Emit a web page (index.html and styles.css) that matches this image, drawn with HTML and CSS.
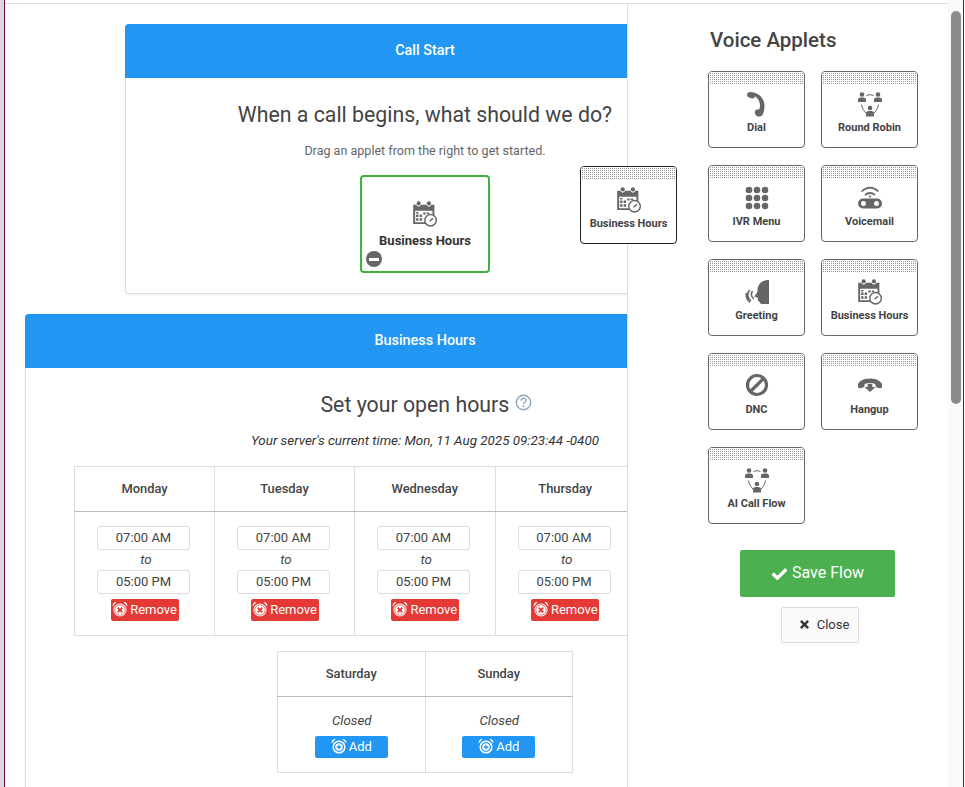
FILE: index.html
```html
<!DOCTYPE html>
<html>
<head>
    <title>Call Flow</title>
    <link rel="stylesheet" href="styles.css">
</head>
<body>
    <svg class="icon-defs" width="0" height="0">
        <symbol id="i-calendar" viewBox="2.500 1 25.500 27">
            <path fill="currentColor" d="M3 5h3.200a2.600 2.600 0 0 0 5 0h5.600a2.600 2.600 0 0 0 5 0H25v13h-2a7 7 0 0 0-7 7H3zM5 11v12h10.400a8 8 0 0 1 7.600-7V11z" fill-rule="evenodd"/>
            <circle cx="8.700" cy="3.500" r="2.200" fill="currentColor"/>
            <circle cx="19.300" cy="3.500" r="2.200" fill="currentColor"/>
            <path fill="currentColor" d="M6 15h2.500v2.500H6zM9.700 15h2.500v2.500H9.700zM6 19h2.500v2.500H6zM9.700 19h2.500v2.500H9.700zM13.400 13h2.500v2H13.400zM17 13h2.500v1.500H17zM6 12.500h2.500v1.500H6z"/>
            <circle cx="21" cy="21" r="6" fill="#fff" stroke="currentColor" stroke-width="1.500"/>
            <path d="M20 22l3.500-3" stroke="currentColor" stroke-width="1.500" fill="none"/>
        </symbol>
        <symbol id="i-people" viewBox="-1 -1 26 26">
            <circle cx="4" cy="2.500" r="2.300" fill="currentColor"/>
            <circle cx="20" cy="2.500" r="2.300" fill="currentColor"/>
            <circle cx="12" cy="16" r="2.300" fill="currentColor"/>
            <path fill="currentColor" d="M0 10V7.500C0 6 1.500 5.400 4 5.400s4 .6 4 2.100V10zM16 10V7.500C16 6 17.500 5.400 20 5.400s4 .6 4 2.100V10zM8 24.500V21c0-1.500 1.500-2 4-2s4 .5 4 2v3.500z"/>
            <path fill="none" stroke="currentColor" stroke-width="1" d="M8.500 3.500Q12 1.700 15.500 3.500M3.500 12.500C4 16 6 19 8 21M20.500 12.500C20 16 18 19 16 21"/>
        </symbol>
        <symbol id="i-dial" viewBox="0 0 26 26">
            <path fill="currentColor" d="M6 1C4.300 1 3 2.200 3 3.800c0 1.300 1 2.600 2.500 3l3 .7c1.200 0 2.200-1 2.500-2.300 3 2 5 5.500 5 9.500 0 1.500-.3 2.600-.8 3.500-2-.3-3.700.6-4.200 2-.6 2.300.5 4.500 2.800 5.200 2 .6 4-.3 5.200-2.500 1-2.400 1.500-5.400 1.500-8.400C20.500 7 14 1 6 1z"/>
        </symbol>
        <symbol id="i-keypad" viewBox="-1 -1 26 26">
            <circle cx="4" cy="4" r="3.300" fill="currentColor"/><circle cx="12" cy="4" r="3.300" fill="currentColor"/><circle cx="20" cy="4" r="3.300" fill="currentColor"/>
            <circle cx="4" cy="12" r="3.300" fill="currentColor"/><circle cx="12" cy="12" r="3.300" fill="currentColor"/><circle cx="20" cy="12" r="3.300" fill="currentColor"/>
            <circle cx="4" cy="20" r="3.300" fill="currentColor"/><circle cx="12" cy="20" r="3.300" fill="currentColor"/><circle cx="20" cy="20" r="3.300" fill="currentColor"/>
        </symbol>
        <symbol id="i-voicemail" viewBox="-1 -1 26 26">
            <path fill="none" stroke="currentColor" stroke-width="1.700" d="M3.500 5.500Q12-2.400 20.500 5.500M7 9Q12 5 17 9"/>
            <path fill="currentColor" d="M10.200 9.800h3.600L12 11.800z"/>
            <path fill="currentColor" fill-rule="evenodd" d="M5 12.500h14a5 5 0 0 1 0 10H5a5 5 0 0 1 0-10zM5.500 15a2.500 2.500 0 1 0 0 5 2.500 2.500 0 0 0 0-5zM18.500 15a2.500 2.500 0 1 0 0 5 2.500 2.500 0 0 0 0-5z"/>
        </symbol>
        <symbol id="i-greeting" viewBox="-1 -1 26 26">
            <path fill="currentColor" d="M24 0v24h-7c-1.500 0-2.500-1-2.500-2.500-1 0-1.700-.5-1.700-1.200 0-.4.200-.7.400-.9-.5-.2-.7-.6-.6-1 0-.3.200-.5.400-.7-1.300-.2-3.500-.5-3.500-1.400 0-1 2.800-3 3-4.800C12.300 5 16 0 24 0z"/>
            <path fill="none" stroke="currentColor" stroke-width="1.600" d="M7.500 11c-2 3-1 6 1.500 8M4.500 10c-2.700 4-2 8 1.500 11M1.500 13c-1 3 0 6 3.500 9.500"/>
        </symbol>
        <symbol id="i-ban" viewBox="0 0 26 26">
            <circle cx="13" cy="12" r="9.500" fill="none" stroke="currentColor" stroke-width="3.200"/>
            <path d="M6.500 18.500l13-13" stroke="currentColor" stroke-width="3.200"/>
        </symbol>
        <symbol id="i-hangup" viewBox="0 0 28 28">
            <path fill="currentColor" d="M1 13c0-3 5-7 13-7s13 4 13 7c0 2-.5 3.500-1.500 3.500-1.500 0-4-1-5-1.500-.7-.4-.6-2-.7-2.800-1.500-1-3.500-1.300-5.800-1.300s-4.300.3-5.800 1.300c-.1.800 0 2.400-.7 2.800-1 .5-3.500 1.500-5 1.500C1.500 16.500 1 15 1 13z"/>
            <path fill="currentColor" d="M11.500 11.500h5V15H20l-6 5.500L8 15h3.500z"/>
        </symbol>
        <symbol id="i-alarm-x" viewBox="0 0 16 16">
            <circle cx="8" cy="9" r="6.500" fill="#fff"/>
            <path fill="#fff" d="M.8 5.500C.2 3 1.800 1 4.500 1zM15.200 5.500C15.800 3 14.200 1 11.500 1z"/>
            <path fill="none" stroke="currentColor" stroke-width="1.800" d="M5.700 6.700l4.600 4.600M10.300 6.700l-4.600 4.600"/>
            <circle cx="8" cy="9" r="5.200" fill="none" stroke="currentColor" stroke-width=".7"/>
        </symbol>
        <symbol id="i-alarm-plus" viewBox="0 0 16 16">
            <circle cx="8" cy="9" r="5.800" fill="none" stroke="#fff" stroke-width="1.500"/>
            <circle cx="8" cy="9" r="3.800" fill="#fff"/>
            <path fill="#fff" d="M.8 5.500C.2 3 1.800 1 4.500 1zM15.200 5.500C15.800 3 14.200 1 11.500 1z"/>
            <path fill="none" stroke="currentColor" stroke-width="1.300" d="M8 6.800v4.400M5.800 9h4.400"/>
        </symbol>
    </svg>

    <div class="edge"></div>
    <div class="frame">
        <div class="top-rule"></div>
        <div class="workspace">
            <div class="canvas">
                <section class="flow-card flow-card-small">
                    <div class="flow-card-head">Call Start</div>
                    <div class="flow-card-body start-body">
                        <h2>When a call begins, what should we do?</h2>
                        <p class="hint">Drag an applet from the right to get started.</p>
                        <div class="drop-box">
                            <svg class="drop-icon"><use href="#i-calendar"/></svg>
                            <span>Business Hours</span>
                            <span class="minus-badge"></span>
                        </div>
                    </div>
                </section>

                <section class="flow-card flow-card-wide">
                    <div class="flow-card-head">Business Hours</div>
                    <div class="flow-card-body hours-body">
                        <h2 class="hours-title">Set your open hours
                            <svg class="help-icon" viewBox="0 0 16 16"><circle cx="8" cy="8" r="6.800" fill="none" stroke="currentColor" stroke-width="1.300"/><path d="M5.800 6.300c0-3 4.500-3 4.500-.2 0 1.700-2.300 1.700-2.300 3.500" fill="none" stroke="currentColor" stroke-width="1.300"/><circle cx="8" cy="11.500" r=".9" fill="currentColor"/></svg>
                        </h2>
                        <p class="server-time">Your server's current time: Mon, 11 Aug 2025 09:23:44 -0400</p>

                        <table class="hours-table week">
                            <tr>
                                <th>Monday</th><th>Tuesday</th><th>Wednesday</th><th>Thursday</th>
                            </tr>
                            <tr>
                                <td><div class="time-box">07:00 AM</div><div class="to">to</div><div class="time-box">05:00 PM</div><button class="btn-remove"><svg><use href="#i-alarm-x"/></svg>Remove</button></td>
                                <td><div class="time-box">07:00 AM</div><div class="to">to</div><div class="time-box">05:00 PM</div><button class="btn-remove"><svg><use href="#i-alarm-x"/></svg>Remove</button></td>
                                <td><div class="time-box">07:00 AM</div><div class="to">to</div><div class="time-box">05:00 PM</div><button class="btn-remove"><svg><use href="#i-alarm-x"/></svg>Remove</button></td>
                                <td><div class="time-box">07:00 AM</div><div class="to">to</div><div class="time-box">05:00 PM</div><button class="btn-remove"><svg><use href="#i-alarm-x"/></svg>Remove</button></td>
                            </tr>
                        </table>

                        <table class="hours-table weekend">
                            <tr>
                                <th>Saturday</th><th>Sunday</th>
                            </tr>
                            <tr>
                                <td><div class="closed">Closed</div><button class="btn-add"><svg><use href="#i-alarm-plus"/></svg>Add</button></td>
                                <td><div class="closed">Closed</div><button class="btn-add"><svg><use href="#i-alarm-plus"/></svg>Add</button></td>
                            </tr>
                        </table>
                    </div>
                </section>
            </div>

            <aside class="sidebar">
                <h3>Voice Applets</h3>
                <div class="applet-grid">
                    <div class="applet"><div class="grip"></div><svg><use href="#i-dial"/></svg><span>Dial</span></div>
                    <div class="applet"><div class="grip"></div><svg><use href="#i-people"/></svg><span>Round Robin</span></div>
                    <div class="applet"><div class="grip"></div><svg><use href="#i-keypad"/></svg><span>IVR Menu</span></div>
                    <div class="applet"><div class="grip"></div><svg><use href="#i-voicemail"/></svg><span>Voicemail</span></div>
                    <div class="applet"><div class="grip"></div><svg><use href="#i-greeting"/></svg><span>Greeting</span></div>
                    <div class="applet"><div class="grip"></div><svg><use href="#i-calendar"/></svg><span>Business Hours</span></div>
                    <div class="applet"><div class="grip"></div><svg><use href="#i-ban"/></svg><span>DNC</span></div>
                    <div class="applet"><div class="grip"></div><svg><use href="#i-hangup"/></svg><span>Hangup</span></div>
                    <div class="applet"><div class="grip"></div><svg><use href="#i-people"/></svg><span>AI Call Flow</span></div>
                </div>
                <div class="sidebar-actions">
                    <button class="btn-save">
                        <svg viewBox="0 0 20 16"><path d="M2 8.500l5.500 5.500L18 3.500" fill="none" stroke="currentColor" stroke-width="4"/></svg>Save Flow
                    </button>
                    <button class="btn-close">
                        <svg viewBox="0 0 12 12"><path d="M2 2l8 8M10 2l-8 8" fill="none" stroke="currentColor" stroke-width="2.600"/></svg>Close
                    </button>
                </div>
            </aside>

            <div class="applet dragging"><div class="grip"></div><svg><use href="#i-calendar"/></svg><span>Business Hours</span></div>
        </div>
    </div>
    <div class="scroll-track"><div class="scroll-thumb"></div></div>
    <div class="edge-right"></div>
</body>
</html>
```

FILE: styles.css
```css
* {
    box-sizing: border-box;
}

html, body {
    height: 100%;
}

body {
    font-family: 'Roboto', sans-serif;
    margin: 0;
    background-color: #fff;
    color: #333;
    display: flex;
    overflow: hidden;
}

.icon-defs {
    position: absolute;
}

.edge {
    width: 5px;
    flex: none;
    background-color: #dbd8dc;
    border-right: 1px solid #7b0a45;
}

.edge-right {
    width: 2px;
    flex: none;
    border-left: 1px solid #7b0a45;
}

.frame {
    flex: 1;
    min-width: 0;
    display: flex;
    flex-direction: column;
}

.top-rule {
    height: 4px;
    flex: none;
    border-bottom: 1px solid #ddd;
}

.workspace {
    flex: 1;
    min-height: 0;
    display: flex;
    position: relative;
}

.scroll-track {
    width: 15px;
    flex: none;
    background-color: #fafafa;
    padding: 11px 2px 0 3px;
}

.scroll-thumb {
    height: 393px;
    background-color: #8c8c8c;
    border-radius: 5px;
}

/* left side, cut off by the sidebar */
.canvas {
    width: 622px;
    flex: none;
    overflow: hidden;
    padding-top: 20px;
}

.flow-card {
    background-color: #fff;
    border: 1px solid #ddd;
    border-radius: 4px;
    box-shadow: 0 1px 2px rgba(0, 0, 0, 0.08);
}

.flow-card-small {
    width: 600px;
    margin-left: 120px;
    height: 270px;
}

.flow-card-wide {
    width: 800px;
    margin: 20px 0 0 20px;
}

.flow-card-head {
    background-color: #2196f3;
    color: #fff;
    height: 54px;
    margin: -1px -1px 0;
    padding-bottom: 2px;
    border-radius: 4px 4px 0 0;
    display: flex;
    align-items: center;
    justify-content: center;
    font-size: 14.400px;
    font-weight: 500;
}

.flow-card-body {
    text-align: center;
}

.start-body h2 {
    margin: 0;
    padding-top: 23px;
    font-size: 21.300px;
    line-height: 28px;
    font-weight: 400;
    color: #444;
}

.hint {
    margin: 14px 0 0;
    font-size: 12.550px;
    line-height: 16px;
    color: #666;
}

.drop-box {
    position: relative;
    width: 130px;
    height: 98px;
    margin: 16px auto 0;
    border: 2px solid #3cb43c;
    border-radius: 4px;
    display: flex;
    flex-direction: column;
    align-items: center;
    padding-top: 24px;
    font-size: 13px;
    font-weight: 700;
    color: #333;
}

.drop-icon {
    width: 26px;
    height: 26px;
    color: #666;
    margin-bottom: 6px;
}

.minus-badge {
    position: absolute;
    left: 4px;
    bottom: 4px;
    width: 16px;
    height: 16px;
    border-radius: 50%;
    background-color: #666;
}

.minus-badge::after {
    content: "";
    position: absolute;
    left: 3px;
    right: 3px;
    top: 6.500px;
    height: 3px;
    background-color: #fff;
}

.hours-body {
    padding: 23px 49px 40px;
}

.hours-title {
    margin: 0;
    padding-left: 2px;
    font-size: 21.300px;
    line-height: 28px;
    font-weight: 400;
    color: #444;
}

.help-icon {
    width: 17px;
    height: 17px;
    color: #8fa5b8;
    vertical-align: 1px;
}

.server-time {
    margin: 14px 0 0;
    font-size: 13.400px;
    line-height: 16px;
    font-style: italic;
}

.hours-table {
    border-collapse: collapse;
    table-layout: fixed;
    font-size: 13px;
    color: #444;
}

.hours-table th {
    height: 45px;
    padding-bottom: 2px;
    border: 1px solid #ddd;
    border-bottom-color: #bbb;
    font-size: 12.900px;
    font-weight: 500;
}

.hours-table td {
    border: 1px solid #ddd;
    padding: 0;
    vertical-align: top;
}

.week {
    width: 562px;
    margin: 17px 0 0 -1px;
}

.week th:nth-child(-n+2) {
    width: 140px;
}

.week td {
    height: 124px;
    padding-top: 14px;
}

.weekend {
    width: 296px;
    margin: 15px auto 0;
}

.weekend td {
    height: 76px;
    padding-top: 14px;
}

.time-box {
    width: 93px;
    height: 24px;
    margin-left: 22px;
    border: 1px solid #ddd;
    border-radius: 3px;
    font-size: 13px;
    line-height: 22px;
}

.to, .closed {
    font-style: italic;
    height: 20px;
    line-height: 20px;
    font-size: 13.300px;
}

.to {
    padding-left: 3px;
}

.closed {
    padding-left: 1px;
}

.btn-remove, .btn-add {
    font-family: inherit;
    color: #fff;
    border: none;
    border-radius: 2px;
    padding: 0 0 2px;
    font-size: 13px;
    display: inline-flex;
    align-items: center;
    justify-content: center;
}

.btn-remove svg, .btn-add svg {
    width: 16px;
    height: 16px;
    margin-right: 2px;
}

.btn-remove {
    width: 68px;
    height: 22px;
    margin-top: 5px;
    background-color: #e53935;
    color: #fff;
}

.btn-remove svg {
    color: #e53935;
}

.btn-add {
    width: 73px;
    height: 22px;
    margin-top: 5px;
    background-color: #2196f3;
}

.btn-add svg {
    color: #2196f3;
}

/* right side */
.sidebar {
    flex: 1;
    min-width: 0;
    background-color: #fff;
    border-left: 1px solid #ddd;
    padding: 0 0 0 80px;
    position: relative;
}

.sidebar h3 {
    margin: 0;
    padding: 23px 0 0 2px;
    height: 67px;
    font-size: 20.500px;
    line-height: 26px;
    font-weight: 500;
    color: #444;
}

.applet-grid {
    display: grid;
    grid-template-columns: 97px 97px;
    grid-auto-rows: 77px;
    column-gap: 16px;
    row-gap: 17px;
}

.applet {
    background-color: #fff;
    border: 1px solid #666;
    border-radius: 4px;
    display: flex;
    flex-direction: column;
    align-items: center;
    font-size: 11px;
    font-weight: 700;
    color: #444;
    overflow: hidden;
}

.applet svg {
    width: 26px;
    height: 26px;
    color: #666;
    margin: 6px 0 4px;
    flex: none;
}

.grip {
    width: 100%;
    height: 13px;
    flex: none;
    background-color: #999;
    background-image: linear-gradient(90deg, #fff 1px, transparent 1px), linear-gradient(#fff 1px, transparent 1px);
    background-size: 2px 2px;
}

.dragging {
    position: absolute;
    left: 575px;
    top: 162px;
    width: 97px;
    height: 78px;
    border-color: #222;
    z-index: 5;
}

.dragging svg {
    margin-top: 7px;
}

.sidebar-actions {
    display: flex;
    flex-direction: column;
    align-items: center;
    width: 225px;
    margin-left: -3px;
    padding-top: 26px;
}

.btn-save {
    width: 155px;
    height: 47px;
    padding: 0 0 2px;
    background-color: #4caf50;
    color: #fff;
    border: none;
    border-radius: 2px;
    font-family: inherit;
    font-size: 16px;
    display: flex;
    align-items: center;
    justify-content: center;
}

.btn-save svg {
    width: 17px;
    height: 14px;
    margin-right: 4px;
}

.btn-close {
    width: 78px;
    height: 36px;
    margin: 10px 0 0 5px;
    padding: 0 0 2px 8px;
    background-color: #fafafa;
    color: #333;
    border: 1px solid #ddd;
    border-radius: 2px;
    font-family: inherit;
    font-size: 13px;
    display: flex;
    align-items: center;
    justify-content: center;
}

.btn-close svg {
    width: 11px;
    height: 11px;
    margin-right: 7px;
}
```
